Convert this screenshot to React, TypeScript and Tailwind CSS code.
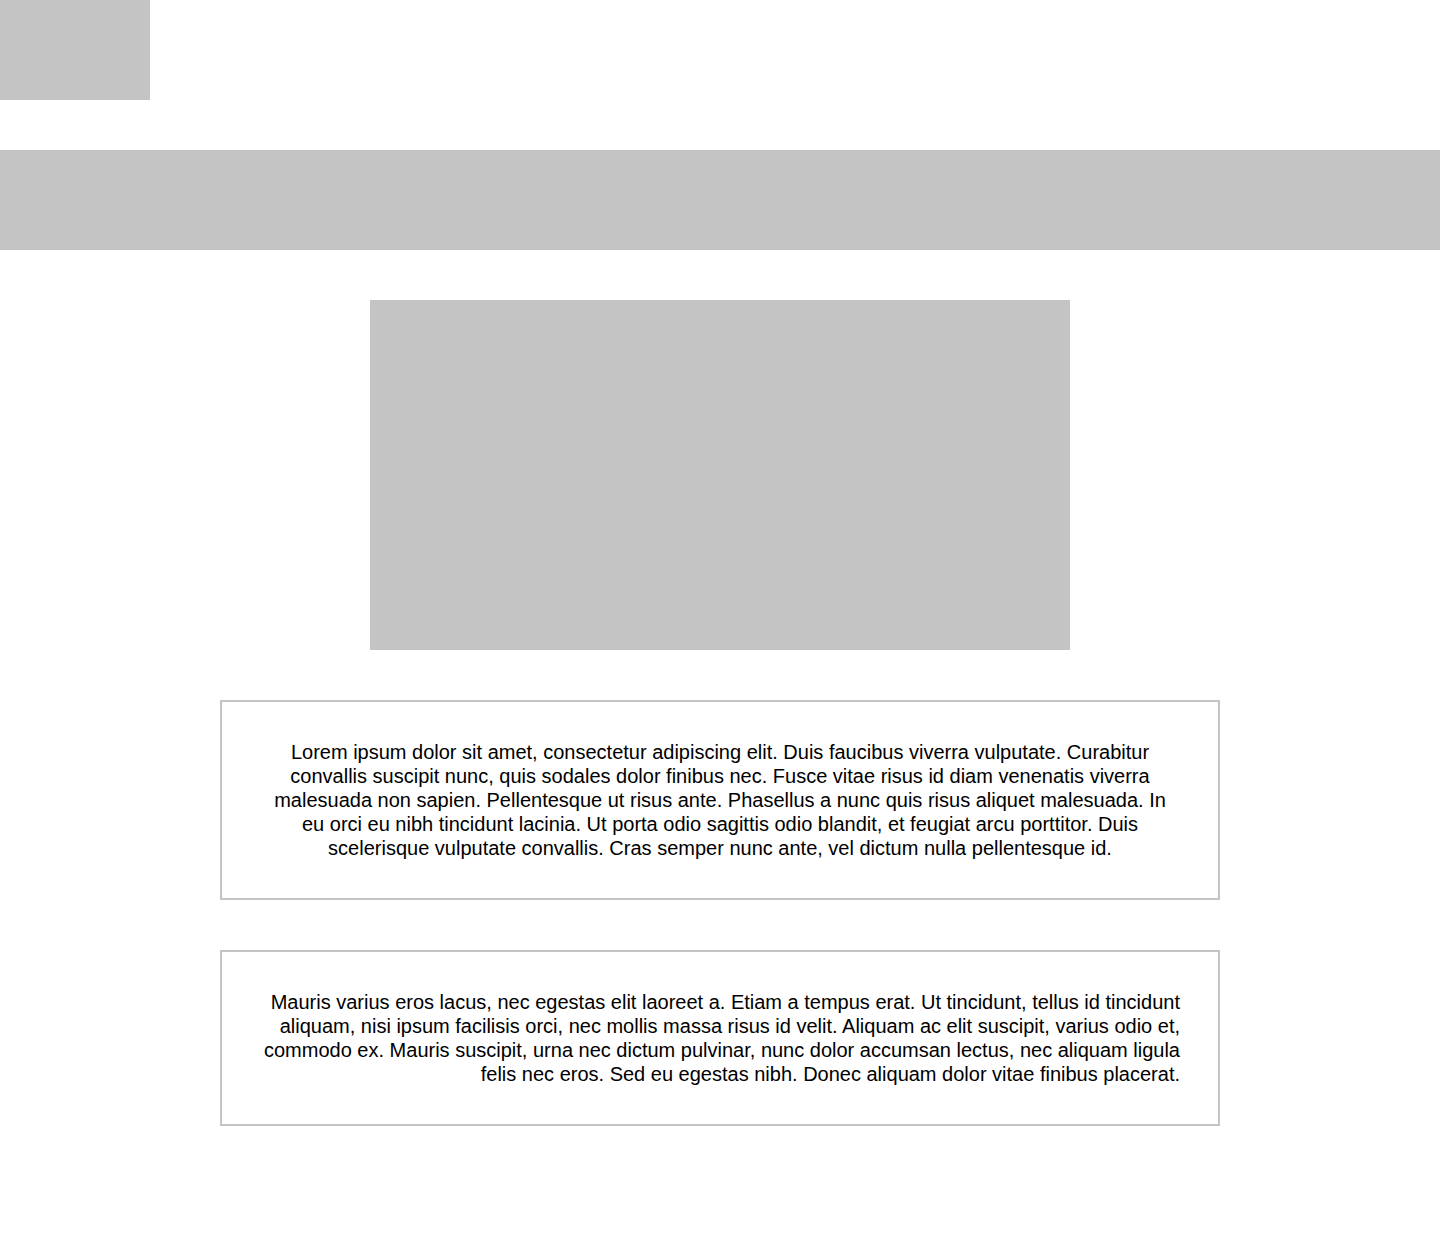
export default function App() {
  return (
    <div
      className="flex min-h-[1254px] w-full flex-col gap-[50px] bg-white pb-[129px] text-black"
      style={{ fontFamily: '"Liberation Sans", Arial, sans-serif' }}
    >
      <div className="h-[100px] w-[150px] bg-[#c4c4c4]" />
      <div className="h-[100px] w-full bg-[#c4c4c4]" />
      <div className="h-[350px] w-[700px] self-center bg-[#c4c4c4]" />
      <div className="w-[1000px] self-center border-2 border-[#c4c4c4] px-[48px] py-[38px]">
        <p className="text-center text-[20px] leading-[24px]">
          Lorem ipsum dolor sit amet, consectetur adipiscing elit. Duis faucibus viverra vulputate. Curabitur
          convallis suscipit nunc, quis sodales dolor finibus nec. Fusce vitae risus id diam venenatis viverra
          malesuada non sapien. Pellentesque ut risus ante. Phasellus a nunc quis risus aliquet malesuada. In
          eu orci eu nibh tincidunt lacinia. Ut porta odio sagittis odio blandit, et feugiat arcu porttitor. Duis
          scelerisque vulputate convallis. Cras semper nunc ante, vel dictum nulla pellentesque id.
        </p>
      </div>
      <div className="w-[1000px] self-center border-2 border-[#c4c4c4] p-[38px]">
        <p className="text-right text-[20px] leading-[24px]">
          Mauris varius eros lacus, nec egestas elit laoreet a. Etiam a tempus erat. Ut tincidunt, tellus id tincidunt
          aliquam, nisi ipsum facilisis orci, nec mollis massa risus id velit. Aliquam ac elit suscipit, varius odio et,
          commodo ex. Mauris suscipit, urna nec dictum pulvinar, nunc dolor accumsan lectus, nec aliquam ligula
          felis nec eros. Sed eu egestas nibh. Donec aliquam dolor vitae finibus placerat.
        </p>
      </div>
    </div>
  );
}
